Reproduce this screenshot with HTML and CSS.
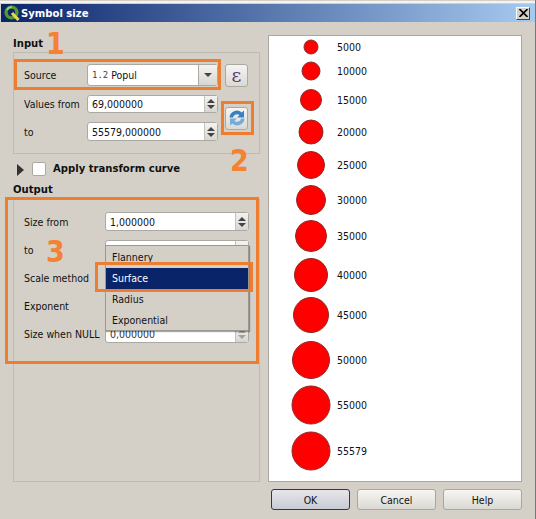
FILE: index.html
```html
<!DOCTYPE html>
<html lang="en">
<head>
    <meta charset="UTF-8">
    <title>Symbol size</title>
    <link rel="stylesheet" href="styles.css">
</head>
<body>
    <div class="dialog">
        <div class="titlebar">
            <svg class="app-icon" width="16" height="16" viewBox="0 0 16 16">
                <circle cx="7.5" cy="7.5" r="5.4" fill="none" stroke="#589632" stroke-width="3.4"/>
                <path d="M8 8l6.5 7" stroke="#eed64a" stroke-width="3"/>
                <path d="M3 5a5 5 0 0 1 5-3" fill="none" stroke="#a5cc8a" stroke-width="1.5"/>
            </svg>
            <span class="title">Symbol size</span>
            <span class="close">
                <svg width="9" height="8" viewBox="0 0 9 8"><path d="M.5 0l8 8M8.5 0l-8 8" stroke="#000" stroke-width="1.6"/></svg>
            </span>
        </div>

        <div class="content">
            <div class="left">
                <div class="heading input-heading">Input</div>
                <div class="group input-group">
                    <label>Source</label>
                    <div class="combo">
                        <span class="type-tag">1.2</span><span>Popul</span>
                        <span class="combo-arrow"><i class="tri-down"></i></span>
                    </div>
                    <button class="tool-btn epsilon">&#949;</button>

                    <label>Values from</label>
                    <div class="spin"><span>69,000000</span><span class="spin-btns"><i class="tri-up"></i><i class="tri-down"></i></span></div>
                    <button class="tool-btn refresh">
                        <svg width="18" height="18" viewBox="0 0 18 18">
                            <path d="M1.5 8.5A7.3 7.3 0 0 1 13.8 3.6L16 1.5V8.5H9.2l2.3-2.4A4 4 0 0 0 5 8.5z" fill="#3a80c0"/>
                            <path d="M16.5 9.5A7.3 7.3 0 0 1 4.2 14.4L2 16.5V9.5h6.8l-2.3 2.4A4 4 0 0 0 13 9.5z" fill="#74acd9"/>
                        </svg>
                    </button>

                    <label class="to-label">to</label>
                    <div class="spin to-spin"><span>55579,000000</span><span class="spin-btns"><i class="tri-up"></i><i class="tri-down"></i></span></div>
                </div>

                <div class="transform-row">
                    <i class="tri-right"></i>
                    <span class="checkbox"></span>
                    <span class="heading">Apply transform curve</span>
                </div>

                <div class="heading output-heading">Output</div>
                <div class="group output-group">
                    <label>Size from</label>
                    <div class="spin"><span>1,000000</span><span class="spin-btns"><i class="tri-up"></i><i class="tri-down"></i></span></div>
                    <label>to</label>
                    <div class="spin"><span></span><span class="spin-btns"><i class="tri-up"></i><i class="tri-down"></i></span></div>
                    <label>Scale method</label>
                    <div class="blank-field"></div>
                    <label>Exponent</label>
                    <div class="blank-field"></div>
                    <label>Size when NULL</label>
                    <div class="spin disabled"><span>0,000000</span><span class="spin-btns"><i class="tri-up"></i><i class="tri-down"></i></span></div>
                </div>
            </div>

            <div class="legend">
                <div class="legend-row" style="height:14px"><span class="dot" style="width:15px;height:15px"></span><span>5000</span></div>
                <div class="legend-row" style="height:18px;margin-top:8px"><span class="dot" style="width:19px;height:19px"></span><span>10000</span></div>
                <div class="legend-row" style="height:22px;margin-top:9px"><span class="dot" style="width:22px;height:22px"></span><span>15000</span></div>
                <div class="legend-row" style="height:25px;margin-top:8px"><span class="dot" style="width:25px;height:25px"></span><span>20000</span></div>
                <div class="legend-row" style="height:27px;margin-top:7px"><span class="dot" style="width:28px;height:28px"></span><span>25000</span></div>
                <div class="legend-row" style="height:30px;margin-top:7px"><span class="dot" style="width:30px;height:30px"></span><span>30000</span></div>
                <div class="legend-row" style="height:32px;margin-top:5px"><span class="dot" style="width:32px;height:32px"></span><span>35000</span></div>
                <div class="legend-row" style="height:34px;margin-top:6px"><span class="dot" style="width:34px;height:34px"></span><span>40000</span></div>
                <div class="legend-row" style="height:36px;margin-top:5px"><span class="dot" style="width:36px;height:36px"></span><span>45000</span></div>
                <div class="legend-row" style="height:38px;margin-top:8px"><span class="dot" style="width:38px;height:38px"></span><span>50000</span></div>
                <div class="legend-row" style="height:39px;margin-top:6px"><span class="dot" style="width:39px;height:39px"></span><span>55000</span></div>
                <div class="legend-row" style="height:39px;margin-top:7px"><span class="dot" style="width:39px;height:39px"></span><span>55579</span></div>
            </div>
        </div>

        <div class="footer">
            <button class="push-btn default">OK</button>
            <button class="push-btn">Cancel</button>
            <button class="push-btn">Help</button>
        </div>

        <!-- open scale method list -->
        <ul class="popup">
            <li>Flannery</li>
            <li class="selected">Surface</li>
            <li>Radius</li>
            <li>Exponential</li>
        </ul>

        <!-- orange annotations drawn on top of the screenshot -->
        <div class="mark mark-source"></div>
        <div class="mark mark-refresh"></div>
        <div class="mark mark-output"></div>
        <div class="mark mark-surface"></div>
        <span class="num num-1">1</span>
        <span class="num num-2">2</span>
        <span class="num num-3">3</span>
    </div>
</body>
</html>
```

FILE: styles.css
```css
* {
    box-sizing: border-box;
}
html, body {
    margin: 0;
    height: 100%;
}
body {
    background: #d4d0c8;
    font-family: "DejaVu Sans Condensed", "Liberation Sans", Arial, sans-serif;
    font-size: 10.5px;
    color: #111;
    overflow: hidden;
}
.dialog {
    position: relative;
    width: 536px;
    height: 519px;
    padding: 4px 0 0 1px;
    border-right: 1px solid #777;
    display: flex;
    flex-direction: column;
}
.dialog::before {
    content: "";
    position: absolute;
    left: 0;
    right: 0;
    top: 1px;
    height: 2px;
    background: #f4f3ef;
}
.titlebar {
    height: 18px;
    flex: none;
    display: flex;
    align-items: center;
    padding: 0 5px 0 3px;
    background: linear-gradient(90deg, #0a246a, #a6caf0);
}
.app-icon {
    flex: none;
}
.title {
    margin-left: 1px;
    font-weight: bold;
    font-size: 11.2px;
    color: #fff;
    flex: 1;
}
.close {
    width: 14px;
    height: 13px;
    background: #d4d0c8;
    border: 1px solid;
    border-color: #fff #404040 #404040 #fff;
    display: flex;
    align-items: center;
    justify-content: center;
}
.content {
    display: flex;
    gap: 8px;
    padding: 13px 13px 0 12px;
    height: 460px;
    flex: none;
}
.left {
    width: 247px;
    flex: none;
    display: flex;
    flex-direction: column;
}
.heading {
    font-weight: bold;
    font-size: 11.2px;
}
.input-heading {
    height: 17px;
    padding-top: 2px;
}
.group {
    border: 1px solid #bfbbb3;
    padding-left: 10px;
}
.group label {
    align-self: center;
    white-space: nowrap;
}
.input-group {
    height: 102px;
    flex: none;
    display: grid;
    grid-template-columns: 63px 131px 30px;
    grid-template-rows: 22px 18px 19px;
    row-gap: 9px;
    align-content: start;
    padding-top: 11px;
}
.output-group {
    flex: 1;
    display: grid;
    grid-template-columns: 81px 144px;
    grid-template-rows: repeat(5, 19px);
    row-gap: 9px;
    align-content: start;
    padding-top: 12px;
}
.combo, .spin, .blank-field {
    background: #fff;
    border: 1px solid #aaa9a4;
    border-radius: 3px;
    display: flex;
    align-items: center;
    padding-left: 4px;
    position: relative;
}
.to-label {
    grid-row: 3;
    grid-column: 1;
}
.to-spin {
    grid-row: 3;
    grid-column: 2;
}
.type-tag {
    font-family: "DejaVu Sans Mono", monospace;
    font-size: 9px;
    color: #444;
    margin-right: 3px;
}
.combo-arrow {
    position: absolute;
    right: 0;
    top: 0;
    bottom: 0;
    width: 19px;
    border-left: 1px solid #aaa9a4;
    background: linear-gradient(#f4f3f0, #d8d6d0);
    display: flex;
    align-items: center;
    justify-content: center;
}
.spin-btns {
    position: absolute;
    right: 0;
    top: 0;
    bottom: 0;
    width: 13px;
    border-left: 1px solid #c4c2bc;
    background: linear-gradient(#f4f3f0, #d8d6d0);
    display: flex;
    flex-direction: column;
    align-items: center;
    justify-content: center;
    gap: 2px;
}
.tri-down, .tri-up, .tri-right {
    display: block;
    width: 0;
    height: 0;
    border-style: solid;
    border-color: transparent;
}
.tri-down {
    border-width: 4px 4px 0;
    border-top-color: #444;
}
.tri-up {
    border-width: 0 4px 4px;
    border-bottom-color: #444;
}
.tri-right {
    border-width: 6px 0 6px 7px;
    border-left-color: #333;
}
.spin.disabled {
    color: #333;
}
.spin.disabled i {
    opacity: .4;
}
.blank-field {
    visibility: hidden;
}
.tool-btn {
    width: 23px;
    height: 23px;
    margin-left: 7px;
    padding: 0;
    border: 1px solid #aaa9a4;
    border-radius: 3px;
    background: linear-gradient(#f6f5f2, #dbd9d3);
    display: flex;
    align-items: center;
    justify-content: center;
}
.epsilon {
    font-family: "DejaVu Serif", serif;
    font-size: 19px;
    line-height: 19px;
    color: #5c3a7e;
}
.refresh {
    grid-column: 3;
    grid-row: 2 / 4;
    align-self: center;
}
.transform-row {
    height: 27px;
    padding: 8px 0 0 4px;
    display: flex;
    align-items: flex-start;
    flex: none;
}
.transform-row .tri-right {
    margin-top: 2px;
}
.checkbox {
    width: 14px;
    height: 14px;
    margin-left: 8px;
    background: #fff;
    border: 1px solid #aaa9a4;
    border-radius: 2px;
}
.transform-row .heading {
    margin-left: 7px;
    line-height: 14px;
}
.output-heading {
    height: 18px;
    line-height: 18px;
    flex: none;
}
.legend {
    width: 254px;
    flex: none;
    height: 447px;
    background: #fff;
    border: 1px solid #a9a7a0;
    padding-top: 4px;
    display: flex;
    flex-direction: column;
}
.legend-row {
    position: relative;
    flex: none;
    display: flex;
    align-items: center;
    padding-left: 68px;
}
.dot {
    position: absolute;
    left: 42px;
    top: 50%;
    transform: translate(-50%, -50%);
    background: #f00;
    border: 1px solid #8e2a2a;
    border-radius: 50%;
}
.footer {
    display: flex;
    justify-content: flex-end;
    gap: 7px;
    padding: 7px 13px 0 0;
}
.push-btn {
    width: 79px;
    height: 21px;
    padding: 0;
    font: inherit;
    color: #111;
    border: 1px solid #a9a7a0;
    border-radius: 3px;
    background: linear-gradient(#f6f5f2, #dbd9d3);
}
.push-btn.default {
    border-color: #2a3560;
    background: linear-gradient(#e6e6ea, #c9cbd4);
}
.popup {
    position: absolute;
    left: 105px;
    top: 245px;
    width: 144px;
    height: 86px;
    margin: 0;
    padding: 1px 0 0;
    list-style: none;
    background: #d4d0c8;
    border: 1px solid #9a9890;
    box-shadow: 1px 1px 1px rgba(0,0,0,.35);
}
.popup li {
    height: 21px;
    line-height: 21px;
    padding-left: 6px;
}
.popup .selected {
    background: #0a246a;
    color: #fff;
}
.mark {
    position: absolute;
    border: 3px solid #ed7d31;
}
.mark-source {
    left: 14px;
    top: 59px;
    width: 207px;
    height: 31px;
}
.mark-refresh {
    left: 221px;
    top: 101px;
    width: 33px;
    height: 34px;
}
.mark-output {
    left: 5px;
    top: 197px;
    width: 254px;
    height: 167px;
}
.mark-surface {
    left: 95px;
    top: 262px;
    width: 158px;
    height: 30px;
}
.num {
    position: absolute;
    font-family: "DejaVu Sans Condensed", "Liberation Sans", Arial, sans-serif;
    font-weight: bold;
    font-size: 30px;
    line-height: 30px;
    color: #f58233;
}
.num-1 {
    left: 46px;
    top: 29px;
}
.num-2 {
    left: 230px;
    top: 146px;
}
.num-3 {
    left: 46px;
    top: 237px;
}
```
